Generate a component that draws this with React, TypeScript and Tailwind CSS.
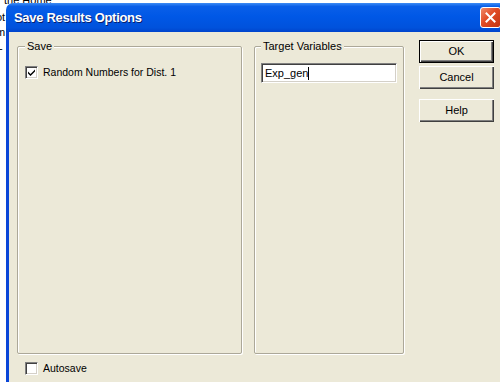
import React from 'react';

const ui = { fontFamily: '"Liberation Sans", Arial, sans-serif' };

const Checkbox = ({ checked }: { checked?: boolean }) => (
  <span className="relative inline-block w-[13px] h-[13px] bg-white border border-[#808080] border-r-white border-b-white shadow-[inset_1px_1px_0_#404040,inset_-1px_-1px_0_#d4d0c8]">
    {checked && (
      <svg className="absolute left-[1px] top-[1px]" width="9" height="9" viewBox="0 0 9 9">
        <path d="M1 3.5 L3.5 6 L8 1.5 L8 3.5 L3.5 8 L1 5.5 Z" fill="#000" />
      </svg>
    )}
  </span>
);

const Button = ({ label, isDefault }: { label: string; isDefault?: boolean }) => (
  <button
    type="button"
    className={`w-[75px] h-[23px] bg-[#ece9d8] text-[11px] text-black flex items-center justify-center ${
      isDefault
        ? 'border border-black shadow-[inset_1px_1px_0_#fff,inset_-1px_-1px_0_#404040,inset_-2px_-2px_0_#808080]'
        : 'shadow-[inset_1px_1px_0_#fff,inset_-1px_-1px_0_#404040,inset_-2px_-2px_0_#808080]'
    }`}
  >
    {label}
  </button>
);

export default function App() {
  return (
    <div className="relative w-[500px] h-[382px] bg-white overflow-hidden" style={ui}>
      {/* bits of the window behind */}
      <span className="absolute left-[4px] top-[-8px] text-[11px] text-black">the Home</span>
      <span className="absolute left-[-4px] top-[9px] text-[11px] text-black">ot</span>
      <span className="absolute left-[-4px] top-[24px] text-[11px] text-black">m</span>
      <span className="absolute left-[-1px] top-[40px] text-[11px] text-black">-</span>

      {/* dialog window */}
      <div className="absolute left-[6px] top-[3px] w-[500px] h-[400px] flex flex-col">
        <div className="h-[29px] rounded-tl-[7px] bg-[linear-gradient(180deg,#3d8cf5_0%,#0a5fe8_12%,#0058e6_45%,#0052dc_85%,#0044cc_100%)] flex items-center pl-[8px] pr-[5px] justify-between">
          <span className="text-white font-bold text-[13px] tracking-[-0.3px] [text-shadow:1px_1px_0_#0a1f6b]">
            Save Results Options
          </span>
          <span className="w-[21px] h-[21px] rounded-[3px] border border-white bg-[linear-gradient(135deg,#f08a6a_0%,#e04a24_45%,#c33512_100%)] flex items-center justify-center">
            <svg width="11" height="11" viewBox="0 0 11 11">
              <path d="M1.5 1.5 L9.5 9.5 M9.5 1.5 L1.5 9.5" stroke="#fff" strokeWidth="2" strokeLinecap="square" />
            </svg>
          </span>
        </div>

        <div className="flex-1 border-l-[3px] border-[#0a46d8] bg-[#ece9d8] pl-[8px] pt-[8px]">
          <div className="flex items-start">
            <fieldset className="w-[225px] h-[314px] border border-[#aca899] rounded-[2px] shadow-[1px_1px_0_#fff,inset_1px_1px_0_#fff] px-[7px]">
              <legend className="px-[2px] text-[11px] leading-[13px] text-black bg-[#ece9d8]">Save</legend>
              <label className="flex items-center gap-[5px] mt-[12px] text-[10.5px] text-black">
                <Checkbox checked />
                Random Numbers for Dist. 1
              </label>
            </fieldset>

            <fieldset className="ml-[12px] w-[149px] h-[314px] border border-[#aca899] rounded-[2px] shadow-[1px_1px_0_#fff,inset_1px_1px_0_#fff] px-[6px]">
              <legend className="px-[2px] text-[11px] leading-[13px] text-black bg-[#ece9d8]">Target Variables</legend>
              <div className="mt-[10px] w-[136px] h-[20px] bg-white border border-[#808080] border-r-white border-b-white shadow-[inset_1px_1px_0_#404040,inset_-1px_-1px_0_#d4d0c8] flex items-center pl-[3px] text-[11px] text-black">
                Exp_gen
                <span className="inline-block w-[1px] h-[13px] bg-black" />
              </div>
            </fieldset>

            <div className="ml-[15px] flex flex-col gap-[3px]">
              <Button label="OK" isDefault />
              <Button label="Cancel" />
              <div className="mt-[7px]">
                <Button label="Help" />
              </div>
            </div>
          </div>

          <label className="flex items-center gap-[5px] mt-[7px] ml-[8px] text-[10.5px] text-black">
            <Checkbox />
            Autosave
          </label>
        </div>
      </div>
    </div>
  );
}
